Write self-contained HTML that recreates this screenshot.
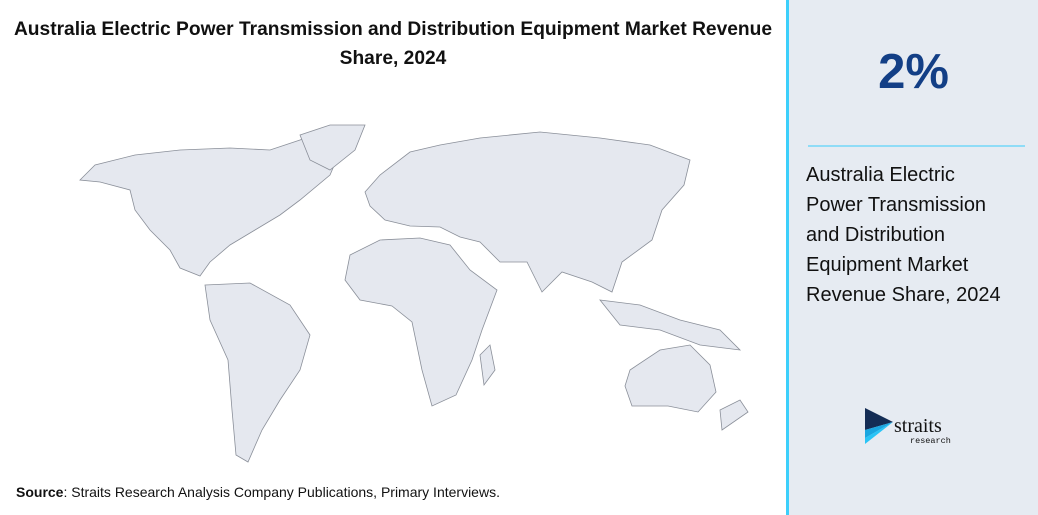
<!DOCTYPE html>
<html><head><style>
body{margin:0;width:1038px;height:515px;background:#fff;font-family:"Liberation Sans",Arial,sans-serif;position:relative;overflow:hidden}
.title{position:absolute;left:0;width:786px;top:15px;text-align:center;font-size:19.2px;font-weight:bold;line-height:29px;color:#111}
.src{position:absolute;left:16px;top:484px;font-size:14px;color:#111}
.panel{position:absolute;left:786px;top:0;width:252px;height:515px;background:#e6ebf2;border-left:3px solid #3ccffb;box-sizing:border-box}
.pct{position:absolute;left:0;width:249px;top:44px;text-align:center;font-size:49px;font-weight:bold;color:#133f86}
.line{position:absolute;left:19px;top:145px;width:217px;height:2px;background:#8fdcf7}
.desc{position:absolute;left:17px;top:160px;font-size:20px;line-height:30px;color:#111}
</style></head><body>
<div class="title">Australia Electric Power Transmission and Distribution Equipment Market Revenue<br>Share, 2024</div>
<svg style="position:absolute;left:0;top:0" width="786" height="480">
<g fill="#e5e8ef" stroke="#8a8f99" stroke-width="0.8">
<path d="M80,180 95,165 135,155 180,150 230,148 270,150 300,140 330,130 345,140 330,175 300,200 280,215 255,230 230,245 210,262 200,276 180,268 170,250 150,230 135,210 130,190 100,182Z"/>
<path d="M300,135 330,125 365,125 355,150 330,170 310,160Z"/>
<path d="M205,285 250,283 290,305 310,335 300,370 280,400 262,430 248,462 236,455 232,410 228,360 210,320Z"/>
<path d="M365,192 380,175 410,152 440,145 480,138 540,132 600,138 650,145 690,160 684,185 662,210 652,240 622,262 612,292 592,282 562,272 542,292 527,262 500,262 480,242 460,237 440,227 410,226 385,220 370,206Z"/>
<path d="M350,255 380,240 420,238 450,245 470,270 497,290 482,330 472,360 456,395 432,406 422,370 412,322 392,306 360,300 345,280Z"/>
<path d="M480,355 490,345 495,370 484,385Z"/>
<path d="M630,370 660,350 690,345 710,365 716,392 698,412 668,406 632,406 625,386Z"/>
<path d="M600,300 640,305 680,320 720,330 740,350 700,345 660,330 620,325Z"/>
<path d="M720,410 740,400 748,412 722,430Z"/>
</g></svg>
<div class="src"><b>Source</b>: Straits Research Analysis Company Publications, Primary Interviews.</div>
<div class="panel">
<div class="pct">2%</div>
<div class="line"></div>
<div class="desc">Australia Electric<br>Power Transmission<br>and Distribution<br>Equipment Market<br>Revenue Share, 2024</div>
<svg style="position:absolute;left:76px;top:408px" width="100" height="40">
<polygon points="0,0 28,14 0,22" fill="#142d55"/>
<polygon points="0,30 28,14 0,36" fill="#29c4f6"/>
<polygon points="0,22 28,14 0,30" fill="#1aa6e0"/>
<text x="29" y="24" font-family="Liberation Serif,serif" font-size="20" fill="#111">straits</text>
<text x="45" y="35" font-family="Liberation Mono,monospace" font-size="8.5" fill="#111">research</text>
</svg>
</div>
</body></html>
